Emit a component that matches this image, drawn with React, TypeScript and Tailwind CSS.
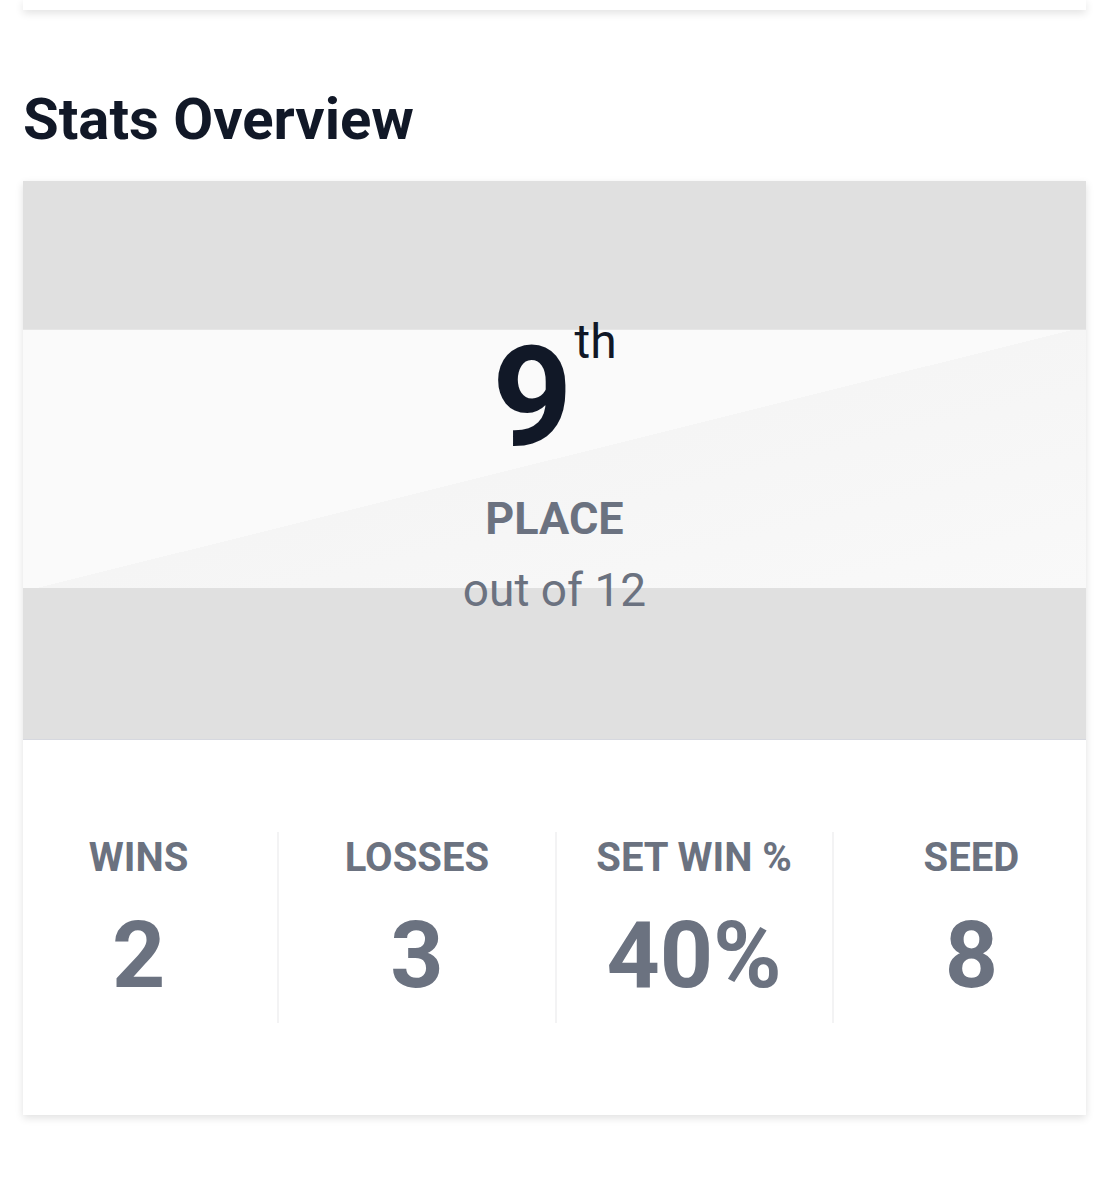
import React from "react";

const stats = [
  { label: "WINS", value: "2" },
  { label: "LOSSES", value: "3" },
  { label: "SET WIN %", value: "40%" },
  { label: "SEED", value: "8" },
];

export default function App() {
  return (
    <div className="min-h-[1200px] bg-white font-['Roboto',sans-serif]">
      <div className="px-[23px]">
        <div className="h-[10px] bg-white shadow-[0_3px_8px_rgba(0,0,0,0.12)]" />
        <h2 className="mt-[80px] text-[58px] font-bold leading-none text-[#111827]">
          Stats Overview
        </h2>
        <div className="mt-[33px] bg-white shadow-[0_3px_8px_rgba(0,0,0,0.12)]">
          <div className="relative h-[559px] border-b border-[#d6d8df] bg-[#e0e0e0]">
            <div className="absolute left-0 right-0 top-[148px] h-[259px] border-t border-[#e6e6e6] bg-[linear-gradient(166deg,#fafafa_50%,#f5f5f5_50%,#f9f9f9_100%)]" />
            <div className="relative flex flex-col items-center pt-[146px]">
              <div className="flex items-start">
                <span className="text-[140px] font-bold leading-none text-[#111827]">9</span>
                <span className="ml-[2px] mt-[-9px] text-[48px] leading-none text-[#111827]">th</span>
              </div>
              <div className="mt-[29px] text-[45px] font-bold leading-none text-[#6b7280]">PLACE</div>
              <div className="mt-[26px] text-[46px] leading-none text-[#6b7280]">out of 12</div>
            </div>
          </div>
          <div className="py-[92px]">
            <div className="mx-[-23px] grid grid-cols-4">
              {stats.map((s, i) => (
                <div
                  key={s.label}
                  className={
                    i === 0
                      ? "flex h-[191px] flex-col items-center pt-[6px]"
                      : "flex h-[191px] flex-col items-center border-l-2 border-[#f3f3f4] pt-[6px]"
                  }
                >
                  <div className="text-[40px] font-bold leading-none text-[#6b7280]">{s.label}</div>
                  <div className="mt-[31px] text-[93px] font-bold leading-none text-[#6b7280]">{s.value}</div>
                </div>
              ))}
            </div>
          </div>
        </div>
      </div>
    </div>
  );
}
